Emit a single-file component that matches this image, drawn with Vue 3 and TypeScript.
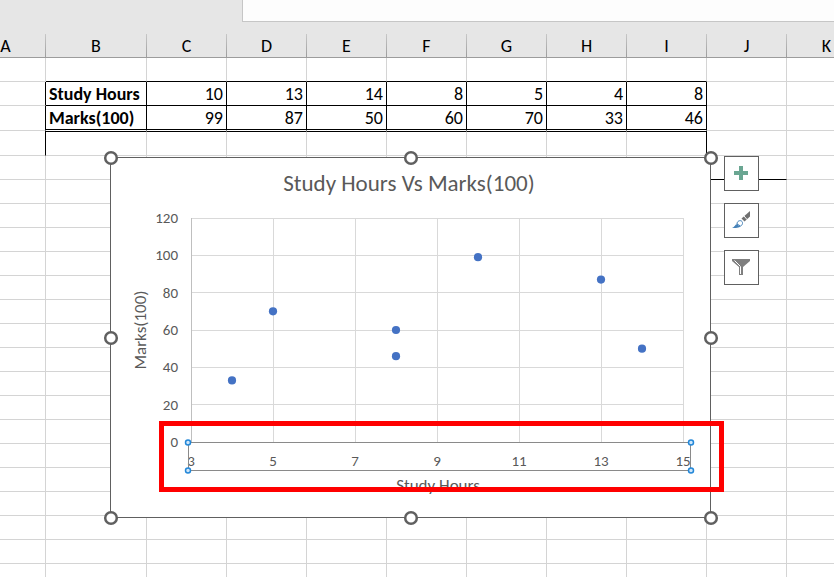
<script setup lang="ts">
interface Point {
  hours: number
  marks: number
}

const columns: string[] = ['A', 'B', 'C', 'D', 'E', 'F', 'G', 'H', 'I', 'J', 'K']
const points: Point[] = [
  { hours: 10, marks: 99 },
  { hours: 13, marks: 87 },
  { hours: 14, marks: 50 },
  { hours: 8, marks: 60 },
  { hours: 5, marks: 70 },
  { hours: 4, marks: 33 },
  { hours: 8, marks: 46 },
]
const emptyRows = 20

const xTicks: number[] = [3, 5, 7, 9, 11, 13, 15]
const yTicks: number[] = [0, 20, 40, 60, 80, 100, 120]

// Plot area inside the chart's own coordinate system.
const plot = { left: 81, right: 573, top: 61, bottom: 285 }
const xOf = (v: number): number => plot.left + ((v - 3) / 12) * (plot.right - plot.left)
const yOf = (v: number): number => plot.bottom - (v / 120) * (plot.bottom - plot.top)
const line = (v: number): number => Math.floor(v) + 0.5

const frameHandles: [number, number][] = [
  [1, 1], [301, 1], [601, 1],
  [1, 181], [601, 181],
  [1, 361], [301, 361], [601, 361],
]
const axisHandles: [number, number][] = [[78, 285], [581, 285], [78, 313], [581, 313]]
</script>

<template>
  <main class="workbook">
    <header class="ribbon"><div class="formula-bar"></div></header>

    <div class="sheet">
      <table class="grid">
        <colgroup>
          <col v-for="c in columns" :key="c" :class="{ wide: c === 'B' }" />
        </colgroup>
        <thead>
          <tr>
            <th v-for="c in columns" :key="c" scope="col">{{ c }}</th>
          </tr>
        </thead>
        <tbody>
          <tr class="above">
            <td v-for="c in columns" :key="c"></td>
          </tr>
          <tr class="data">
            <td></td>
            <th scope="row">Study Hours</th>
            <td v-for="(p, i) in points" :key="i">{{ p.hours }}</td>
            <td></td>
            <td></td>
          </tr>
          <tr class="data last">
            <td></td>
            <th scope="row">Marks(100)</th>
            <td v-for="(p, i) in points" :key="i">{{ p.marks }}</td>
            <td></td>
            <td></td>
          </tr>
          <tr class="below">
            <td v-for="c in columns" :key="c"></td>
          </tr>
          <tr v-for="r in emptyRows" :key="r" :class="{ ruled: r === 1 }">
            <td v-for="c in columns" :key="c"></td>
          </tr>
        </tbody>
      </table>

      <div class="chart-object">
        <svg class="chart" width="602" height="362" viewBox="0 0 602 362" role="img" aria-label="Study Hours Vs Marks(100)">
          <rect class="frame" x="0.5" y="0.5" width="600" height="360" />
          <text class="title" x="299" y="34">Study Hours Vs Marks(100)</text>

          <g class="gridlines">
            <line v-for="t in yTicks" :key="'h' + t" :x1="plot.left" :x2="plot.right + 1" :y1="line(yOf(t))" :y2="line(yOf(t))" />
            <line v-for="t in xTicks" :key="'v' + t" :x1="line(xOf(t))" :x2="line(xOf(t))" :y1="plot.top" :y2="plot.bottom" />
          </g>
          <line class="axis" :x1="plot.left + 0.5" :x2="plot.left + 0.5" :y1="plot.top" :y2="plot.bottom" />

          <g class="y-labels">
            <text v-for="t in yTicks" :key="t" x="68" :y="Math.round(yOf(t)) + 5">{{ t }}</text>
          </g>
          <g class="x-labels">
            <text v-for="t in xTicks" :key="t" :x="xOf(t)" y="309">{{ t }}</text>
          </g>
          <text class="axis-title" transform="translate(36 173) rotate(-90)">Marks(100)</text>
          <text class="axis-title" x="328" y="334">Study Hours</text>

          <g class="points">
            <circle v-for="(p, i) in points" :key="i" :cx="xOf(p.hours)" :cy="yOf(p.marks)" r="4.1" />
          </g>

          <rect class="axis-selection" x="78.5" y="285.5" width="502" height="28" />
          <circle v-for="(h, i) in axisHandles" :key="'a' + i" class="axis-handle" :cx="h[0]" :cy="h[1] + 0.5" r="2.5" />
          <rect class="highlight" x="51.5" y="266.5" width="560" height="66" />
          <circle v-for="(h, i) in frameHandles" :key="'f' + i" class="frame-handle" :cx="h[0]" :cy="h[1]" r="5.8" />
        </svg>

        <div class="chart-tools">
          <button type="button" aria-label="Chart Elements">
            <svg width="19" height="19" viewBox="0 0 19 19"><path fill="#6aa692" d="M7 2h4v5h5v4h-5v5H7v-5H2V7h5z" /></svg>
          </button>
          <button type="button" aria-label="Chart Styles">
            <svg width="19" height="19" viewBox="0 0 19 19">
              <path fill="#707070" d="M18 0v5.500l-5.500 5-3-3z" />
              <path fill="none" stroke="#fff" d="M12 5l3 3.500" />
              <path fill="#fff" stroke="#4682b8" d="M5 13c0-3 3-4 4.500-3s1.500 4-1 5z" />
              <path fill="#4682b8" d="M0 17c3-1 3-4 5.500-4 1 2 2 2 3 2-1 2-5 2-8.500 2z" />
            </svg>
          </button>
          <button type="button" aria-label="Chart Filters">
            <svg width="19" height="19" viewBox="0 0 19 19">
              <path fill="#7f7f7f" d="M0 1h18v2l-7 6v8H7V9L0 3z" />
              <path fill="none" stroke="#fff" d="M2.500 2.500l6 6v7.500" />
            </svg>
          </button>
        </div>
      </div>
    </div>
  </main>
</template>

<style>
body {
  margin: 0;
  background: #fff;
}
</style>

<style scoped>
.workbook {
  height: 100vh;
  overflow: hidden;
  display: flex;
  flex-direction: column;
  font-family: Carlito, Lato, "Open Sans", sans-serif;
  color: #000;
}
.ribbon {
  flex: none;
  height: 34px;
  background: #e6e6e6;
}
.formula-bar {
  height: 21px;
  margin-left: 242px;
  background: #fdfdfd;
  border-left: 1px solid #c6c6c6;
  border-bottom: 1px solid #c6c6c6;
}
.sheet {
  position: relative;
  flex: 1;
  min-height: 0;
}
.grid {
  width: 901px;
  margin-left: -34px;
  table-layout: fixed;
  border-collapse: separate;
  border-spacing: 0;
}
col {
  width: 80px;
}
col.wide {
  width: 101px;
}
th,
td {
  box-sizing: border-box;
  height: 24px;
  padding: 0;
  border-right: 1px solid #d4d4d4;
  border-bottom: 1px solid #d4d4d4;
  font-size: 18px;
  line-height: 20px;
  white-space: nowrap;
}
thead th {
  background: #e6e6e6;
  border-image: linear-gradient(#c9c9c9, #9b9b9b) 1;
  font-weight: 400;
}
.data th {
  padding-left: 3px;
  font-weight: 700;
  text-align: left;
}
.data td {
  padding-right: 3px;
  text-align: right;
}
.above td:nth-child(n + 2):nth-child(-n + 9),
.data > :nth-child(n + 2):nth-child(-n + 9) {
  border-bottom-color: #000;
}
.data > :nth-child(-n + 9),
.below td:first-child,
.below td:nth-child(9) {
  border-right-color: #000;
}
.last > *,
.below td {
  height: 25px;
}
.data.last > :nth-child(n + 2):nth-child(-n + 9) {
  border-bottom-color: #fff;
  box-shadow: inset 0 -1px 0 #000;
}
.below td:nth-child(n + 2):nth-child(-n + 9) {
  border-top: 1px solid #000;
}
.ruled td:nth-child(10) {
  border-bottom-color: #000;
}
.chart-object {
  position: absolute;
  left: 110px;
  top: 123px;
  display: flex;
  align-items: flex-start;
  gap: 12px;
}
.chart {
  display: block;
  overflow: visible;
}
.chart text {
  fill: #595959;
  text-anchor: middle;
  font-size: 15px;
}
.chart .title {
  font-size: 23px;
}
.chart .axis-title {
  font-size: 17px;
}
.chart .y-labels text {
  text-anchor: end;
}
.frame {
  fill: #fff;
  stroke: #606060;
}
.gridlines line {
  stroke: #d9d9d9;
}
.axis {
  stroke: #bfbfbf;
}
.points circle {
  fill: #4472c4;
}
.axis-selection {
  fill: none;
  stroke: #8a8a8a;
}
.axis-handle {
  fill: #cfe6fa;
  stroke: #2488d8;
  stroke-width: 1.5px;
}
.highlight {
  fill: none;
  stroke: #f00;
  stroke-width: 5px;
}
.frame-handle {
  fill: #fff;
  stroke: #606060;
  stroke-width: 2.5px;
}
.chart-tools {
  display: flex;
  flex-direction: column;
  gap: 12px;
  margin-top: -1px;
}
.chart-tools button {
  box-sizing: border-box;
  width: 35px;
  height: 35px;
  padding: 0 0 1px;
  display: grid;
  place-items: center;
  background: #fff;
  border: 1px solid #606060;
}
</style>
